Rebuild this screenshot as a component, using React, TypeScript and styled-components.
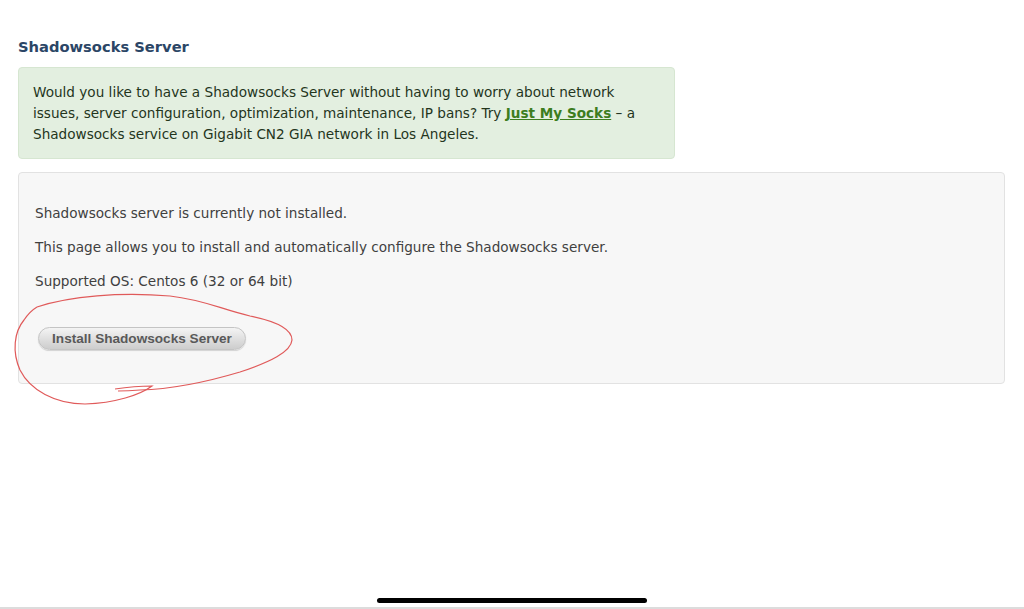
import React from "react";
import styled, { createGlobalStyle } from "styled-components";

const Global = createGlobalStyle`
  html, body { margin: 0; padding: 0; background: #fff; }
  body { font-family: "DejaVu Sans", Verdana, sans-serif; }
`;

const Page = styled.div`
  position: relative;
  width: 1024px;
  height: 609px;
  overflow: hidden;
  box-sizing: border-box;
  padding: 37px 19px 0 18px;
  border-bottom: 2px solid #dcdcdc;
`;

const Title = styled.h2`
  margin: 0 0 10px 0;
  font-size: 14.7px;
  font-weight: bold;
  color: #2b4666;
  line-height: 20px;
`;

const Notice = styled.div`
  width: 657px;
  box-sizing: border-box;
  background: #e3efe0;
  border: 1px solid #d6e6d1;
  border-radius: 4px;
  padding: 14px 22px 13px 14px;
  color: #23351c;
  font-size: 13.6px;
  line-height: 21px;
`;

const Link = styled.a`
  color: #3d7d1e;
  font-weight: bold;
  text-decoration: underline;
`;

const Panel = styled.div`
  margin-top: 13px;
  box-sizing: border-box;
  background: #f7f7f7;
  border: 1px solid #e2e2e2;
  border-radius: 4px;
  padding: 31px 16px 28px 16px;
  height: 212px;
`;

const Para = styled.p`
  margin: 0 0 16px 0;
  font-size: 13.6px;
  line-height: 18px;
  color: #404040;
`;

const Button = styled.button`
  margin: 21px 0 0 3px;
  height: 23px;
  padding: 0;
  width: 208px;
  white-space: nowrap;
  border-radius: 12px;
  border: 1px solid #c4c4c4;
  background: linear-gradient(#f4f4f4, #dcdcdc 60%, #cdcdcd);
  box-shadow: 0 1px 1px rgba(0, 0, 0, 0.15);
  font-family: "Liberation Sans", Arial, sans-serif;
  font-weight: bold;
  font-size: 13.6px;
  color: #595959;
  cursor: pointer;
`;

const Scribble = styled.svg`
  position: absolute;
  left: 0;
  top: 0;
  pointer-events: none;
`;

const HomeBar = styled.div`
  position: absolute;
  left: 377px;
  top: 598px;
  width: 270px;
  height: 5px;
  border-radius: 3px;
  background: #000;
`;

export default function App() {
  return (
    <>
      <Global />
      <Page>
        <Title>Shadowsocks Server</Title>
        <Notice>
          Would you like to have a Shadowsocks Server without having to worry about network
          issues, server configuration, optimization, maintenance, IP bans? Try{" "}
          <Link href="#">Just My Socks</Link> – a Shadowsocks service on Gigabit CN2 GIA
          network in Los Angeles.
        </Notice>
        <Panel>
          <Para>Shadowsocks server is currently not installed.</Para>
          <Para>This page allows you to install and automatically configure the Shadowsocks server.</Para>
          <Para>Supported OS: Centos 6 (32 or 64 bit)</Para>
          <Button>Install Shadowsocks Server</Button>
        </Panel>
        <Scribble width="1024" height="609" viewBox="0 0 1024 609">
          <path
            d="M37 307 C70 296 120 292 170 296 C205 300 220 309 250 316 C275 321 292 328 292 340 C291 352 270 362 240 372 C210 381 175 389 140 390 C128 391 120 391 118 391"
            fill="none"
            stroke="#e05a5a"
            strokeWidth="1.2"
          />
          <path
            d="M115 389 C128 387 140 386 152 386 C140 395 115 403 85 404 C55 404 30 390 20 370 C12 352 14 332 24 320 C28 314 32 310 37 307"
            fill="none"
            stroke="#e05a5a"
            strokeWidth="1.2"
          />
        </Scribble>
        <HomeBar />
      </Page>
    </>
  );
}
